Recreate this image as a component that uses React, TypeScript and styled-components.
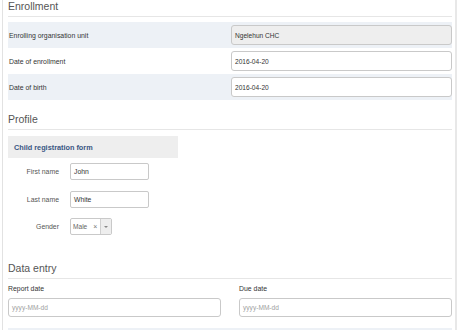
import React from "react";
import styled, { createGlobalStyle } from "styled-components";

const Global = createGlobalStyle`
  html, body { margin: 0; padding: 0; background: #fff; overflow: hidden; }
  body { font-family: "Liberation Sans", Arial, sans-serif; color: #333; }
  * { box-sizing: border-box; }
`;

const Frame = styled.div`
  margin-left: 2px;
  width: 455px;
  height: 330px;
  overflow: hidden;
  border-left: 1px solid #e2e2e2;
  border-right: 2px solid #e8e8e8;
  padding: 0 3px 0 5px;
`;

const Heading = styled.h2<{ $top?: number }>`
  margin: ${(p) => p.$top ?? 0}px 0 5px;
  padding-bottom: 3px;
  font-size: 10.5px;
  line-height: 13px;
  font-weight: normal;
  color: #555;
  border-bottom: 1px solid #e6e6e6;
`;

const InfoRow = styled.div<{ $shaded?: boolean }>`
  display: grid;
  grid-template-columns: 222px 221px;
  align-items: center;
  height: 26px;
  padding-left: 1px;
  background: ${(p) => (p.$shaded ? "#edf1f6" : "#fff")};
`;

const RowLabel = styled.span`
  font-size: 6.9px;
  color: #333;
`;

const TextBox = styled.div<{ $disabled?: boolean; $placeholder?: boolean; $h?: number }>`
  height: ${(p) => p.$h ?? 20}px;
  border: 1px solid #c9c9c9;
  border-radius: 3px;
  background: ${(p) => (p.$disabled ? "#eeeeee" : "#fff")};
  display: flex;
  align-items: center;
  padding-left: 3px;
  font-size: 6.6px;
  color: ${(p) => (p.$placeholder ? "#a0a0a0" : "#333")};
`;

const SectionBar = styled.div`
  margin-top: 6px;
  width: 170px;
  height: 22px;
  background: #eeeeee;
  display: flex;
  align-items: center;
  padding-left: 6px;
  font-size: 7.3px;
  font-weight: bold;
  color: #3a5683;
`;

const FormRows = styled.div`
  display: flex;
  flex-direction: column;
  padding-top: 5px;
`;

const FormRow = styled.div`
  display: grid;
  grid-template-columns: 51px 79px;
  column-gap: 11px;
  align-items: center;
  height: 27.5px;
  align-content: start;
`;

const FormLabel = styled.span`
  text-align: right;
  font-size: 6.9px;
  color: #555;
`;

const FieldBox = styled.div`
  height: 17px;
  border: 1px solid #c9c9c9;
  border-radius: 2px;
  display: flex;
  align-items: center;
  padding-left: 3px;
  font-size: 6.8px;
  color: #333;
`;

const Select = styled.div`
  width: 42px;
  height: 17px;
  border: 1px solid #c9c9c9;
  border-radius: 2px;
  display: flex;
  align-items: stretch;
  font-size: 6.6px;
  color: #666;
  overflow: hidden;
`;

const SelectValue = styled.span`
  flex: 1;
  display: flex;
  align-items: center;
  padding-left: 2px;
  gap: 6px;
`;

const Clear = styled.span`
  font-size: 7px;
  color: #777;
`;

const Arrow = styled.span`
  width: 11px;
  background: #eeeeee;
  border-left: 1px solid #d0d0d0;
  display: flex;
  align-items: center;
  justify-content: center;
  &::after {
    content: "";
    border-left: 2px solid transparent;
    border-right: 2px solid transparent;
    border-top: 2px solid #888;
  }
`;

const EntryGrid = styled.div`
  display: grid;
  grid-template-columns: 213px 213px;
  column-gap: 18px;
`;

const EntryField = styled.div`
  display: flex;
  flex-direction: column;
  gap: 4px;
`;

const EntryLabel = styled.span`
  font-size: 6.9px;
  line-height: 10px;
  color: #333;
`;

const BottomStrip = styled.div`
  margin-top: 11px;
  height: 10px;
  background: #edf1f6;
`;

export default function App() {
  return (
    <>
      <Global />
      <Frame>
        <Heading>Enrollment</Heading>
        <InfoRow $shaded>
          <RowLabel>Enrolling organisation unit</RowLabel>
          <TextBox $disabled>Ngelehun CHC</TextBox>
        </InfoRow>
        <InfoRow>
          <RowLabel>Date of enrollment</RowLabel>
          <TextBox>2016-04-20</TextBox>
        </InfoRow>
        <InfoRow $shaded>
          <RowLabel>Date of birth</RowLabel>
          <TextBox>2016-04-20</TextBox>
        </InfoRow>

        <Heading $top={13}>Profile</Heading>
        <SectionBar>Child registration form</SectionBar>
        <FormRows>
          <FormRow>
            <FormLabel>First name</FormLabel>
            <FieldBox>John</FieldBox>
          </FormRow>
          <FormRow>
            <FormLabel>Last name</FormLabel>
            <FieldBox>White</FieldBox>
          </FormRow>
          <FormRow>
            <FormLabel>Gender</FormLabel>
            <Select>
              <SelectValue>
                Male <Clear>×</Clear>
              </SelectValue>
              <Arrow />
            </Select>
          </FormRow>
        </FormRows>

        <Heading $top={16}>Data entry</Heading>
        <EntryGrid>
          <EntryField>
            <EntryLabel>Report date</EntryLabel>
            <TextBox $placeholder $h={19}>yyyy-MM-dd</TextBox>
          </EntryField>
          <EntryField>
            <EntryLabel>Due date</EntryLabel>
            <TextBox $placeholder $h={19}>yyyy-MM-dd</TextBox>
          </EntryField>
        </EntryGrid>
        <BottomStrip />
      </Frame>
    </>
  );
}
